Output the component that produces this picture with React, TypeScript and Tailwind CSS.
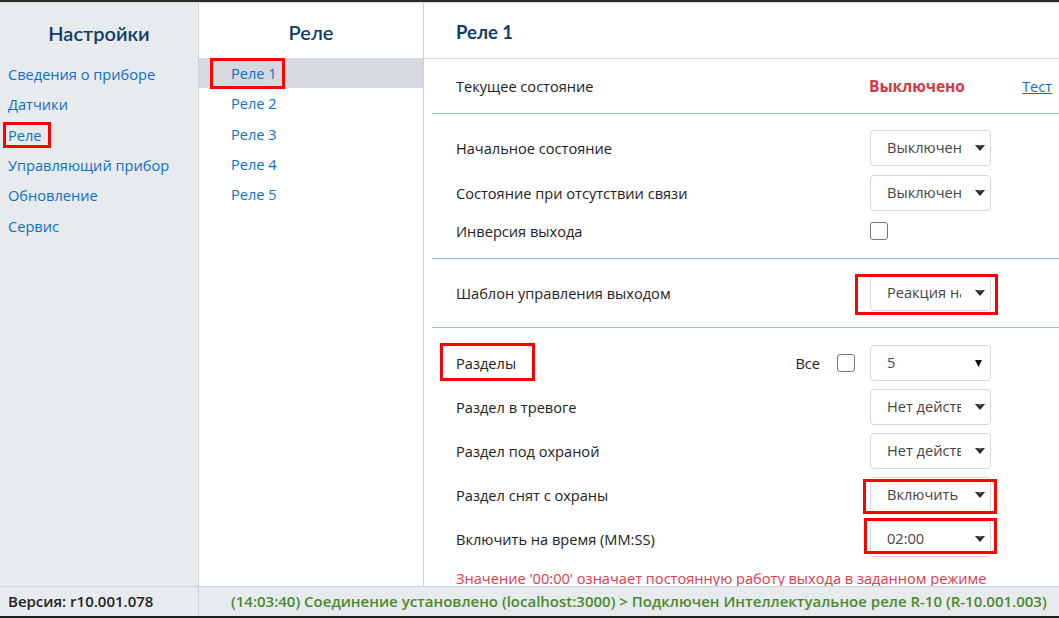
import React from "react";

const navItems = ["Сведения о приборе", "Датчики", "Реле", "Управляющий прибор", "Обновление", "Сервис"];
const relays = ["Реле 1", "Реле 2", "Реле 3", "Реле 4", "Реле 5"];

const Arrow = ({ small }: { small?: boolean }) =>
  small ? (
    <svg width="7" height="7" viewBox="0 0 7 7" className="shrink-0 mr-[4px]">
      <polygon points="0,0 7,0 3.5,7" fill="#111" />
    </svg>
  ) : (
    <svg width="10" height="6" viewBox="0 0 10 6" className="shrink-0 mr-[1px]">
      <polygon points="0,0 10,0 5,6" fill="#2a2a2a" />
      <polygon points="2,0 8,0 5,2" fill="#666" />
    </svg>
  );

const Select = ({ value, small, mark }: { value: string; small?: boolean; mark?: string }) => (
  <div className="relative w-[121px] h-[36px]">
    <div className="w-full h-full rounded-[4px] border border-[#d3d8de] bg-white flex items-center pl-[16px] pr-[4px]">
      <span className={`overflow-hidden whitespace-nowrap text-[#444] ${small ? "w-[90px]" : "w-[74px]"}`}>{value}</span>
      <div className="flex-1" />
      <Arrow small={small} />
    </div>
    {mark && <div className={`absolute border-[3px] border-[#ff0000] pointer-events-none ${mark}`} />}
  </div>
);

const Checkbox = () => <div className="w-[18px] h-[18px] rounded-[3px] border border-[#777] bg-white" />;

const Row = ({ label, children, h = "h-[36px]" }: { label: React.ReactNode; children: React.ReactNode; h?: string }) => (
  <div className={`grid grid-cols-[414px_121px_1fr] items-center pl-6 ${h}`}>
    <div className="text-[#222] pt-[1px]">{label}</div>
    {children}
  </div>
);

const heading = { fontFamily: "Lato, 'Open Sans', sans-serif" };

export default function App() {
  return (
    <div
      className="h-[618px] w-full flex flex-col bg-white border-t-2 border-[#2b2b2b] text-[14.6px] overflow-hidden"
      style={{ fontFamily: '"Open Sans", "Noto Sans", sans-serif' }}
    >
      <div className="flex-1 flex min-h-0 border-t border-[#d9d9d9]">
        {/* settings menu */}
        <aside className="w-[199px] shrink-0 bg-[#e8ebee] border-r border-[#d0d3d6]">
          <h1 className="h-[56px] pt-[3px] flex items-center justify-center text-[20px] font-semibold text-[#0f3d6b]" style={heading}>
            Настройки
          </h1>
          <ul>
            {navItems.map((n) => (
              <li key={n} className="h-[30.4px] pt-[1px] flex items-center pl-2 text-[#0c6fcc]">
                <span className="relative">
                  {n}
                  {n === "Реле" && <span className="absolute -left-[5px] -right-[9px] -top-[3px] -bottom-[2px] border-[3px] border-[#ff0000]" />}
                </span>
              </li>
            ))}
          </ul>
        </aside>

        {/* relay list */}
        <nav className="w-[225px] shrink-0 border-r border-[#d0d3d6]">
          <h2 className="h-[55px] pt-[3px] flex items-center justify-center text-[20px] font-semibold text-[#0f3d6b]" style={heading}>
            Реле
          </h2>
          <ul>
            {relays.map((r, i) => (
              <li key={r} className={`relative h-[30.4px] pt-[1px] flex items-center pl-8 text-[#0c6fcc] ${i === 0 ? "bg-[#d6d9de]" : ""}`}>
                {r}
                {i === 0 && <span className="absolute left-[11px] top-0 w-[75px] h-[31px] border-[3px] border-[#ff0000]" />}
              </li>
            ))}
          </ul>
        </nav>

        {/* relay settings */}
        <main className="flex-1 min-w-0 overflow-hidden">
          <div className="h-[56px] pt-[4px] flex items-center pl-8 border-b border-[#d4d4dc]">
            <span className="text-[18.5px] font-bold text-[#0f3d6b]" style={heading}>Реле 1</span>
          </div>
          <div className="ml-2">
            <div className="h-[55px] pt-[1px] grid grid-cols-[413px_153px_1fr] items-center pl-6 border-b border-[#8cc0ee]">
              <span className="text-[#222]">Текущее состояние</span>
              <span className="font-bold text-[15.5px] text-[#d93444]">Выключено</span>
              <span className="text-[#0c6fcc] underline">Тест</span>
            </div>

            <div className="pt-4 pb-4 flex flex-col gap-[9px] border-b border-[#8cc0ee]">
              <Row label="Начальное состояние"><Select value="Выключен" /></Row>
              <Row label="Состояние при отсутствии связи"><Select value="Выключен" /></Row>
              <Row label="Инверсия выхода" h="h-[22px]"><Checkbox /></Row>
            </div>

            <div className="py-4 border-b border-[#8cc0ee]">
              <Row label="Шаблон управления выходом">
                <Select value="Реакция на" mark="-left-[15px] -right-[7px] -top-[1px] -bottom-[4px]" />
              </Row>
            </div>

            <div className="pt-[17px] flex flex-col gap-[8px]">
              <Row
                label={
                  <div className="flex items-center">
                    <span className="relative">
                      Разделы
                      <span className="absolute -left-[16px] -right-[19px] -top-[10px] -bottom-[7px] border-[3px] border-[#ff0000]" />
                    </span>
                    <div className="flex-1" />
                    <span className="mr-[17px]">Все</span>
                    <div className="mr-[15px]"><Checkbox /></div>
                  </div>
                }
              >
                <Select value="5" small />
              </Row>
              <Row label="Раздел в тревоге"><Select value="Нет действия" /></Row>
              <Row label="Раздел под охраной"><Select value="Нет действия" /></Row>
              <Row label="Раздел снят с охраны">
                <Select value="Включить" mark="-left-[7px] -right-[6px] top-[2px] -bottom-[1px]" />
              </Row>
              <Row label="Включить на время (MM:SS)">
                <Select value="02:00" mark="-left-[6px] -right-[6px] -top-[3px] bottom-[3px]" />
              </Row>
              <div className="pl-6 pt-[3px] text-[#e5384a]">Значение '00:00' означает постоянную работу выхода в заданном режиме</div>
            </div>
          </div>
        </main>
      </div>

      {/* status bar */}
      <footer className="h-[32px] shrink-0 flex bg-[#e8ebee] border-t border-[#cfd2d5] border-b-2 border-b-[#1f1f1f] text-[15px]">
        <div className="w-[199px] shrink-0 flex items-center pl-2 border-r border-[#cfd2d5] font-semibold text-[#222]">
          Версия: r10.001.078
        </div>
        <div className="flex-1 flex items-center pl-8 font-semibold text-[#4b8a2c] whitespace-nowrap overflow-hidden">
          (14:03:40) Соединение установлено (localhost:3000) &gt; Подключен Интеллектуальное реле R-10 (R-10.001.003)
        </div>
      </footer>
    </div>
  );
}
